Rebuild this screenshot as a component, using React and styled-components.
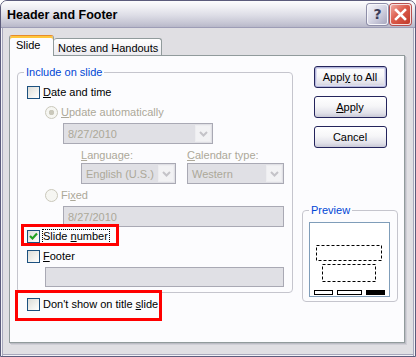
import React from 'react';
import styled, { createGlobalStyle } from 'styled-components';

const GlobalStyle = createGlobalStyle`
  html, body {
    margin: 0;
    padding: 0;
    background: #ffffff;
  }
  body {
    font-family: "Liberation Sans", Arial, sans-serif;
    font-size: 11px;
    color: #000;
  }
`;

const Check = ({ checked }) => (
  <CheckBox>
    {checked && (
      <svg width="11" height="11" viewBox="0 0 11 11">
        <polyline points="2,5 4.5,7.5 9,2.5" stroke="#21a121" strokeWidth="2.2" fill="none" />
      </svg>
    )}
  </CheckBox>
);

const Chevron = () => (
  <svg width="9" height="6" viewBox="0 0 9 6">
    <polyline points="1,1 4.5,4.5 8,1" stroke="#c4c3c8" strokeWidth="2" fill="none" />
  </svg>
);

const Combo = ({ value, width }) => (
  <Field $width={width}>
    <FieldText>{value}</FieldText>
    <DropBtn>
      <Chevron />
    </DropBtn>
  </Field>
);

export default function App() {
  return (
    <>
      <GlobalStyle />
      <Window>
        <TitleBar>
          <Title>Header and Footer</Title>
          <CapBtn>?</CapBtn>
          <CapBtn $close>
            <svg width="13" height="13" viewBox="0 0 13 13">
              <path d="M2 2 L11 11 M11 2 L2 11" stroke="#fff" strokeWidth="2.6" strokeLinecap="square" />
            </svg>
          </CapBtn>
        </TitleBar>

        <Body>
          <Tabs>
            <Tab $active>Slide</Tab>
            <Tab>Notes and Handouts</Tab>
          </Tabs>

          <Panel>
            <LeftCol>
              <Group $width={276} $height={227}>
                <Legend>Include on slide</Legend>
                <GroupBody>
                  <CheckRow $mt={7}>
                    <Check />
                    <Label><u>D</u>ate and time</Label>
                  </CheckRow>
                  <Indent>
                    <CheckRow $mt={7}>
                      <Radio $on />
                      <Label $disabled><u>U</u>pdate automatically</Label>
                    </CheckRow>
                    <Indent $mt={4}>
                      <Combo value="8/27/2010" width={150} />
                      <Indent $mt={5}>
                        <LocaleGrid>
                          <Caption><u>L</u>anguage:</Caption>
                          <Caption><u>C</u>alendar type:</Caption>
                          <Combo value="English (U.S.)" width={95} />
                          <Combo value="Western" width={97} />
                        </LocaleGrid>
                      </Indent>
                    </Indent>
                    <CheckRow $mt={5}>
                      <Radio />
                      <Label $disabled>Fi<u>x</u>ed</Label>
                    </CheckRow>
                    <Indent $mt={4}>
                      <Field $width={221}>
                        <FieldText>8/27/2010</FieldText>
                      </Field>
                    </Indent>
                  </Indent>
                  <MarkedRow $slim>
                    <Check checked />
                    <Label $focus>Slide <u>n</u>umber</Label>
                  </MarkedRow>
                  <CheckRow $mt={7}>
                    <Check />
                    <Label><u>F</u>ooter</Label>
                  </CheckRow>
                  <Indent $mt={4}>
                    <Field $width={239} $height={20} />
                  </Indent>
                </GroupBody>
              </Group>

              <MarkedRow>
                <Check />
                <Label>Don't show on title <u>s</u>lide</Label>
              </MarkedRow>
            </LeftCol>

            <RightCol>
              <Button $default><span>Appl<u>y</u> to All</span></Button>
              <Button><span><u>A</u>pply</span></Button>
              <Button><span>Cancel</span></Button>

              <Group $width={96} $height={98} $mt={48}>
                <Legend>Preview</Legend>
                <PreviewBox>
                  <svg width="79" height="73" viewBox="0 0 79 73">
                    <rect x="6.5" y="22.5" width="65" height="15" fill="none" stroke="#000" strokeDasharray="3 2" />
                    <rect x="12.5" y="41.5" width="53" height="17" fill="none" stroke="#000" strokeDasharray="3 2" />
                    <rect x="4.5" y="67.5" width="18" height="4" fill="#fff" stroke="#000" />
                    <rect x="27.5" y="67.5" width="24" height="4" fill="#fff" stroke="#000" />
                    <rect x="56" y="67" width="19" height="5" fill="#000" />
                  </svg>
                </PreviewBox>
              </Group>
            </RightCol>
          </Panel>
        </Body>
      </Window>
    </>
  );
}

const Window = styled.div`
  width: 416px;
  height: 357px;
  box-sizing: border-box;
  border: 1px solid #5c5c7c;
  border-radius: 7px 7px 0 0;
  background: #e0dfe3;
  display: flex;
  flex-direction: column;
  overflow: hidden;
`;

const TitleBar = styled.div`
  height: 27px;
  box-sizing: border-box;
  display: flex;
  align-items: center;
  gap: 2px;
  padding: 0 4px 1px 6px;
  border-bottom: 1px solid #9d9db6;
  background: linear-gradient(#fdfdfe 0%, #f0f0f4 25%, #dddde6 55%, #c6c6d4 85%, #b8b8c9 100%);
`;

const Title = styled.div`
  flex: 1;
  font-family: "Liberation Sans", Arial, sans-serif;
  font-weight: bold;
  font-size: 12.5px;
  color: #000;
  padding-top: 2px;
`;

const CapBtn = styled.div`
  width: 21px;
  height: 21px;
  box-sizing: border-box;
  display: flex;
  align-items: center;
  justify-content: center;
  margin-top: 1px;
  border: 1px solid ${(p) => (p.$close ? '#f4e0e0' : '#f6f6fa')};
  border-radius: 3px;
  box-shadow: 0 0 0 1px ${(p) => (p.$close ? '#b85050' : '#8e8ea8')};
  background: ${(p) =>
    p.$close
      ? 'linear-gradient(135deg, #f0a8a0 0%, #dc5c4c 45%, #c03828 100%)'
      : 'linear-gradient(135deg, #f4f4fa 0%, #d8d8e6 45%, #a8a8c0 100%)'};
  font-family: "DejaVu Sans", sans-serif;
  font-weight: bold;
  font-size: 14px;
  color: #3c3c58;
`;

const Body = styled.div`
  flex: 1;
  padding: 7px 9px 0 8px;
  box-shadow: inset 1px 0 0 #f2f2f6, inset 2px 0 0 #a8a8bc, inset -1px 0 0 #f2f2f6,
    inset -2px 0 0 #a8a8bc, inset 0 -1px 0 #f2f2f6, inset 0 -2px 0 #a8a8bc;
`;

const Tabs = styled.div`
  display: flex;
  align-items: flex-end;
  margin-bottom: -1px;
  position: relative;
  z-index: 1;
`;

const Tab = styled.div`
  box-sizing: border-box;
  display: flex;
  align-items: center;
  border: 1px solid #919b9c;
  border-bottom: none;
  border-radius: 3px 3px 0 0;
  ${(p) =>
    p.$active
      ? `
    width: 45px;
    height: 21px;
    padding: 0 0 2px 6px;
    border-top: 1px solid #e68b2c;
    box-shadow: inset 0 2px 0 #ffc73c;
    background: #fcfcfe;
  `
      : `
    width: 108px;
    height: 17px;
    margin-bottom: 1px;
    padding: 1px 0 0 4px;
    border-left: none;
    background: linear-gradient(#ffffff, #ecebf0);
  `}
`;

const Panel = styled.div`
  display: flex;
  gap: 9px;
  width: 396px;
  height: 288px;
  box-sizing: border-box;
  border: 1px solid #919b9c;
  background: #fcfcfe;
  padding: 10px 6px 0 7px;
  box-shadow: 1px 1px 0 #bcbcc4, 2px 2px 0 #cfcfd6;
`;

const LeftCol = styled.div`
  display: flex;
  flex-direction: column;
  width: 276px;
`;

const RightCol = styled.div`
  display: flex;
  flex-direction: column;
  align-items: center;
  gap: 8px;
  width: 96px;
`;

const Group = styled.fieldset`
  width: ${(p) => p.$width}px;
  height: ${(p) => p.$height}px;
  box-sizing: border-box;
  margin: ${(p) => p.$mt || 0}px 0 0 0;
  padding: 0;
  min-width: 0;
  border: 1px solid #c5c5cd;
  border-radius: 4px;
  flex-shrink: 0;
`;

const Legend = styled.legend`
  margin-left: 6px;
  padding: 0 2px;
  line-height: 13px;
  color: #0046d5;
`;

const GroupBody = styled.div`
  display: flex;
  flex-direction: column;
  padding-left: 9px;
`;

const Indent = styled.div`
  display: flex;
  flex-direction: column;
  align-items: flex-start;
  padding-left: 18px;
  margin-top: ${(p) => p.$mt || 0}px;
`;

const CheckRow = styled.div`
  display: flex;
  align-items: center;
  height: 13px;
  margin-top: ${(p) => p.$mt}px;
`;

const MarkedRow = styled.div`
  display: flex;
  align-items: flex-start;
  box-sizing: border-box;
  outline: 3px solid #ff0000;
  ${(p) =>
    p.$slim
      ? `
    width: 92px;
    height: 16px;
    margin-left: -3px;
    padding: 3px 0 0 3px;
  `
      : `
    width: 141px;
    height: 25px;
    margin-left: 1px;
    padding: 5px 0 0 9px;
  `}
`;

const LocaleGrid = styled.div`
  display: grid;
  grid-template-columns: 106px 97px;
  grid-template-rows: 14px 21px;
  align-items: start;
`;

const CheckBox = styled.span`
  width: 13px;
  height: 13px;
  box-sizing: border-box;
  flex-shrink: 0;
  display: flex;
  align-items: center;
  justify-content: center;
  border: 1px solid #1c5180;
  background: linear-gradient(135deg, #dcdcd7 0%, #f2f2ef 60%, #ffffff 100%);
`;

const Radio = styled.span`
  width: 13px;
  height: 13px;
  box-sizing: border-box;
  flex-shrink: 0;
  border-radius: 50%;
  border: 1px solid #cac8bb;
  background: ${(p) =>
    p.$on ? 'radial-gradient(circle, #cac8bb 0 2.5px, #f6f6f2 3px)' : '#f6f6f2'};
`;

const Label = styled.span`
  line-height: 13px;
  white-space: nowrap;
  color: ${(p) => (p.$disabled ? '#aca899' : '#000')};
  margin-left: ${(p) => (p.$focus ? 2 : 3)}px;
  ${(p) =>
    p.$focus &&
    `
    border: 1px dotted #000;
    padding-right: 1px;
    margin-top: -1px;
  `}
`;

const Caption = styled.span`
  line-height: 13px;
  color: #aca899;
  white-space: nowrap;
`;

const Field = styled.div`
  display: flex;
  align-items: center;
  box-sizing: border-box;
  width: ${(p) => p.$width}px;
  height: ${(p) => p.$height || 21}px;
  border: 1px solid #a9a9b4;
  background: #e0e0e5;
  padding: 1px;
`;

const FieldText = styled.span`
  flex: 1;
  padding-left: 3px;
  color: #aca899;
  white-space: nowrap;
  overflow: hidden;
`;

const DropBtn = styled.span`
  width: 16px;
  height: 17px;
  box-sizing: border-box;
  display: flex;
  align-items: center;
  justify-content: center;
  border: 1px solid #ededf0;
  background: #f2f2f4;
`;

const Button = styled.div`
  width: 73px;
  height: 22px;
  box-sizing: border-box;
  display: flex;
  align-items: center;
  justify-content: center;
  border: 1px solid #24245c;
  border-radius: 3px;
  background: linear-gradient(#ffffff 0%, #f6f6f8 45%, #e2e2ea 80%, #c8c8d6 100%);
  box-shadow: ${(p) => (p.$default ? 'inset 0 0 0 1px #b4b8dc, inset 0 0 0 2px #dcdcf0' : 'none')};
  color: #000;
`;

const PreviewBox = styled.div`
  width: 81px;
  height: 75px;
  box-sizing: border-box;
  margin: 5px 0 0 6px;
  border: 1px solid #7f9db9;
  background: #fff;
  svg {
    display: block;
  }
`;
